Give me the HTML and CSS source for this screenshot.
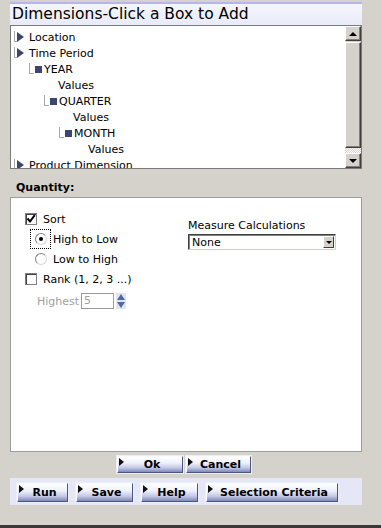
FILE: index.html
```html
<!DOCTYPE html>
<html lang="en">
<head>
    <meta charset="UTF-8">
    <meta name="viewport" content="width=device-width, initial-scale=1.0">
    <title>Dimensions</title>
    <link rel="stylesheet" href="styles.css">
</head>
<body>

    <div class="page">
        <!-- Dimension tree -->
        <div class="title-bar">Dimensions-Click a Box to Add</div>

        <div class="tree">
            <div class="tree-list">
                <div class="node level-0"><span class="elbow"></span><span class="arrow"></span>Location</div>
                <div class="node level-0"><span class="elbow"></span><span class="arrow"></span>Time Period</div>
                <div class="node level-1"><span class="elbow"></span><span class="square"></span>YEAR</div>
                <div class="node values-1">Values</div>
                <div class="node level-2"><span class="elbow"></span><span class="square"></span>QUARTER</div>
                <div class="node values-2">Values</div>
                <div class="node level-3"><span class="elbow"></span><span class="square"></span>MONTH</div>
                <div class="node values-3">Values</div>
                <div class="node level-0"><span class="elbow"></span><span class="arrow"></span>Product Dimension</div>
            </div>
            <div class="scrollbar">
                <div class="scroll-btn up"></div>
                <div class="scroll-thumb"></div>
                <div class="scroll-track"></div>
                <div class="scroll-btn down"></div>
            </div>
        </div>

        <!-- Measure options -->
        <div class="section-label">Quantity:</div>
        <div class="panel">
            <div class="col-left">
                <div class="check-row">
                    <span class="checkbox">
                        <svg width="10" height="10" viewBox="0 0 10 10"><path d="M1.5 4.5 L4 7.5 L8.8 1.2" fill="none" stroke="#000" stroke-width="2"/></svg>
                    </span>Sort
                </div>
                <div class="radio-row">
                    <span class="focus active"><span class="radio on"></span></span>High to Low
                </div>
                <div class="radio-row">
                    <span class="focus"><span class="radio"></span></span>Low to High
                </div>
                <div class="check-row">
                    <span class="checkbox"></span>Rank (1, 2, 3 ...)
                </div>
                <div class="highest-row">
                    <span class="muted">Highest</span>
                    <span class="spin-input">5</span>
                    <span class="spinner"><span class="spin-up"></span><span class="spin-down"></span></span>
                </div>
            </div>
            <div class="col-right">
                <div class="field-label">Measure Calculations</div>
                <div class="select">
                    <span class="select-value">None</span>
                    <span class="select-btn"></span>
                </div>
            </div>
        </div>

        <div class="dialog-buttons">
            <button class="btn btn-ok">Ok</button>
            <button class="btn btn-cancel">Cancel</button>
        </div>

        <div class="toolbar">
            <button class="btn btn-run">Run</button>
            <button class="btn btn-save">Save</button>
            <button class="btn btn-help">Help</button>
            <button class="btn btn-criteria">Selection Criteria</button>
        </div>
    </div>

    <div class="frame-edge"></div>

</body>
</html>
```

FILE: styles.css
```css
body {
    margin: 0;
    background-color: #d5d2cb;
    font-family: "DejaVu Sans", Verdana, sans-serif;
    font-size: 11px;
    color: #000;
}
.page {
    width: 352px;
    margin-left: 10px;
    padding-top: 2px;
}
/* Title */
.title-bar {
    height: 21px;
    line-height: 21px;
    border-top: 2px solid #b6b6ee;
    background: linear-gradient(#f5f5fd, #e8ebf8);
    font-size: 15.5px;
    padding-left: 2px;
    white-space: nowrap;
}
/* Tree */
.tree {
    display: flex;
    height: 142px;
    border: 1px solid #7a7a7a;
    background-color: #fff;
}
.tree-list {
    flex: 1;
    overflow: hidden;
    padding-top: 3px;
}
.node {
    display: flex;
    align-items: center;
    height: 16px;
    white-space: nowrap;
}
.elbow {
    align-self: flex-start;
    margin-top: 2px;
    height: 10px;
    border-left: 1px solid #a8a8a8;
    border-bottom: 1px solid #a8a8a8;
}
.level-0 { padding-left: 3px; }
.level-0 .elbow { width: 2px; }
.level-1 { padding-left: 18px; }
.level-2 { padding-left: 33px; }
.level-3 { padding-left: 48px; }
.level-1 .elbow, .level-2 .elbow, .level-3 .elbow { width: 4px; }
.values-1 { padding-left: 47px; }
.values-2 { padding-left: 62px; }
.values-3 { padding-left: 77px; }
.arrow {
    width: 0;
    height: 0;
    border-left: 7px solid #3c4470;
    border-top: 5px solid transparent;
    border-bottom: 5px solid transparent;
    margin-right: 5px;
}
.square {
    width: 7px;
    height: 7px;
    background-color: #3e4670;
    margin: 0 2px 0 1px;
}
/* Scrollbar */
.scrollbar {
    width: 16px;
    display: flex;
    flex-direction: column;
    background-color: #d5d2cb;
}
.scroll-btn, .scroll-thumb {
    border: 1px solid;
    border-color: #fff #404040 #404040 #fff;
    box-shadow: inset -1px -1px #808080;
    background-color: #d5d2cb;
}
.scroll-btn {
    height: 13px;
    display: flex;
    align-items: center;
    justify-content: center;
}
.scroll-btn.up::after {
    content: "";
    border-bottom: 4px solid #000;
    border-left: 4px solid transparent;
    border-right: 4px solid transparent;
}
.scroll-btn.down::after {
    content: "";
    border-top: 4px solid #000;
    border-left: 4px solid transparent;
    border-right: 4px solid transparent;
}
.scroll-thumb {
    height: 104px;
    margin-top: 1px;
}
.scroll-track {
    flex: 1;
    background: repeating-conic-gradient(#fff 0 25%, #d5d2cb 0 50%) 0 0 / 2px 2px;
}
/* Quantity panel */
.section-label {
    font-weight: bold;
    height: 14px;
    line-height: 14px;
    margin-top: 12px;
    padding-left: 6px;
}
.panel {
    box-sizing: border-box;
    height: 255px;
    margin-top: 2px;
    border: 1px solid #9c9c9c;
    background-color: #fff;
    display: flex;
    padding-top: 11px;
}
.col-left {
    width: 163px;
    padding-left: 14px;
}
.check-row, .radio-row {
    display: flex;
    align-items: center;
    height: 20px;
    white-space: nowrap;
}
.checkbox {
    width: 10px;
    height: 10px;
    border: 1px solid #808080;
    box-shadow: inset 1px 1px #404040;
    background-color: #fff;
    margin-right: 6px;
    display: flex;
    align-items: center;
    justify-content: center;
}
.radio-row {
    padding-left: 5px;
}
.focus {
    width: 19px;
    height: 18px;
    border: 1px dotted transparent;
    display: flex;
    align-items: center;
    justify-content: center;
    margin-right: 2px;
}
.focus.active {
    border-color: #000;
}
.radio {
    width: 10px;
    height: 10px;
    border: 1px solid;
    border-color: #808080 #d8d8d8 #d8d8d8 #808080;
    border-radius: 50%;
    background-color: #fff;
    display: flex;
    align-items: center;
    justify-content: center;
}
.radio.on::after {
    content: "";
    width: 4px;
    height: 4px;
    border-radius: 50%;
    background-color: #000;
}
.highest-row {
    display: flex;
    align-items: center;
    height: 16px;
    margin-top: 4px;
    padding-left: 12px;
}
.muted {
    color: #a0a0a0;
    margin-right: 2px;
}
.spin-input {
    box-sizing: border-box;
    width: 33px;
    height: 16px;
    line-height: 14px;
    border: 1px solid #9a9a9a;
    color: #a0a0a0;
    padding-left: 2px;
}
.spinner {
    width: 10px;
    height: 16px;
    margin-left: 2px;
    display: flex;
    flex-direction: column;
    align-items: center;
    justify-content: space-between;
    background-color: #e4e4ec;
}
.spin-up {
    border-bottom: 6px solid #4a6aa8;
    border-left: 4px solid transparent;
    border-right: 4px solid transparent;
    margin-top: 1px;
}
.spin-down {
    border-top: 6px solid #4a6aa8;
    border-left: 4px solid transparent;
    border-right: 4px solid transparent;
    margin-bottom: 1px;
}
.col-right {
    padding-top: 10px;
}
.field-label {
    line-height: 13px;
}
.select {
    box-sizing: border-box;
    width: 148px;
    height: 16px;
    margin-top: 2px;
    border: 1px solid;
    border-color: #404040 #d4d0c8 #d4d0c8 #404040;
    box-shadow: inset 1px 1px #808080;
    display: flex;
    align-items: center;
    justify-content: space-between;
    background-color: #fff;
}
.select-value {
    padding-left: 3px;
}
.select-btn {
    width: 9px;
    height: 10px;
    margin-right: 1px;
    border: 1px solid;
    border-color: #fff #404040 #404040 #fff;
    background-color: #d5d2cb;
    display: flex;
    align-items: center;
    justify-content: center;
}
.select-btn::after {
    content: "";
    border-top: 3px solid #000;
    border-left: 3px solid transparent;
    border-right: 3px solid transparent;
}
/* Buttons */
.btn {
    position: relative;
    box-sizing: border-box;
    margin: 0;
    padding: 0 0 0 4px;
    font: bold 11px "DejaVu Sans", Verdana, sans-serif;
    color: #000;
    border: 1px solid;
    border-color: #fafaff #4c5480 #4c5480 #fafaff;
    outline: 1px solid #eceef8;
    background: linear-gradient(#ffffff 0%, #eef0fb 40%, #c2c8e6 72%, #7e88ba 100%);
    cursor: pointer;
}
.btn::before {
    content: "";
    position: absolute;
    left: 1px;
    top: 1px;
    border-left: 5px solid #111;
    border-top: 4px solid transparent;
    border-bottom: 4px solid transparent;
}
.dialog-buttons {
    display: flex;
    justify-content: center;
    gap: 3px;
    margin-top: 4px;
    padding-right: 4px;
}
.dialog-buttons .btn {
    height: 17px;
}
.btn-ok { width: 66px; }
.btn-cancel { width: 65px; }
.toolbar {
    box-sizing: border-box;
    display: flex;
    gap: 8px;
    height: 27px;
    margin-top: 5px;
    padding: 5px 0 0 7px;
    background-color: #e5e7f6;
}
.toolbar .btn {
    height: 19px;
}
.btn-run { width: 51px; }
.btn-save, .btn-help { width: 57px; }
.btn-criteria { width: 132px; }
.frame-edge {
    margin-top: 20px;
    height: 3px;
    background-color: #3a3a3a;
}
```
